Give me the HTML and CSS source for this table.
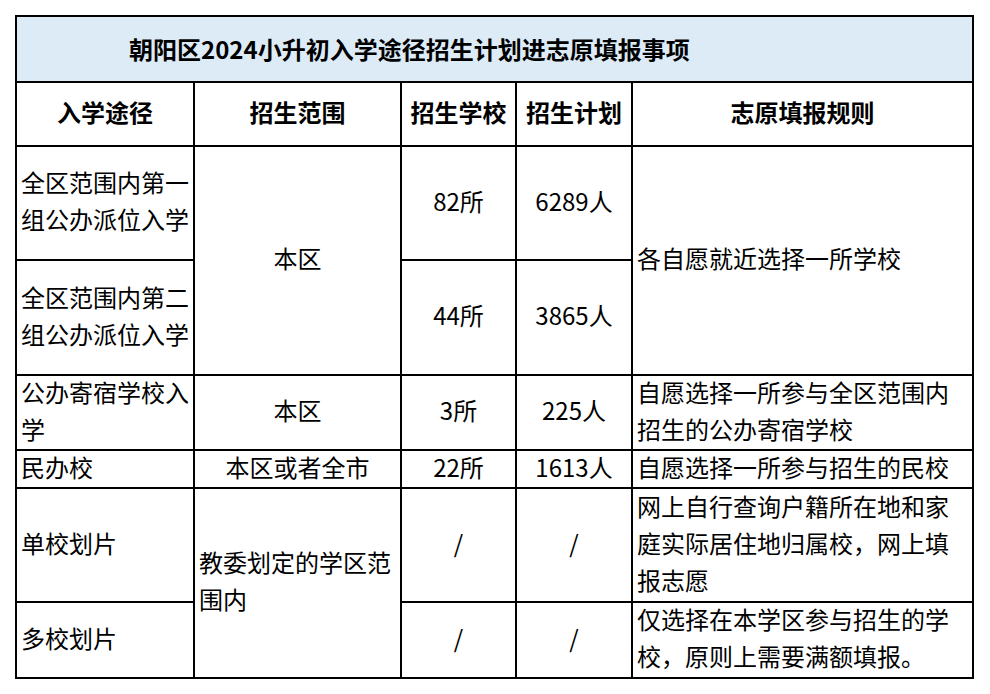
FILE: index.html
```html
<!DOCTYPE html>
<html lang="zh-CN">
<head>
<meta charset="utf-8">
<title>朝阳区2024小升初入学途径招生计划进志原填报事项</title>
<link rel="stylesheet" href="styles.css">
</head>
<body>
<div class="sheet">
  <div class="cell title">朝阳区2024小升初入学途径招生计划进志原填报事项</div>

  <div class="cell head">入学途径</div>
  <div class="cell head">招生范围</div>
  <div class="cell head">招生学校</div>
  <div class="cell head">招生计划</div>
  <div class="cell head">志原填报规则</div>

  <div class="cell">全区范围内第一组公办派位入学</div>
  <div class="cell mid span2">本区</div>
  <div class="cell mid">82所</div>
  <div class="cell mid">6289人</div>
  <div class="cell span2">各自愿就近选择一所学校</div>

  <div class="cell">全区范围内第二组公办派位入学</div>
  <div class="cell mid">44所</div>
  <div class="cell mid">3865人</div>

  <div class="cell">公办寄宿学校入学</div>
  <div class="cell mid">本区</div>
  <div class="cell mid">3所</div>
  <div class="cell mid">225人</div>
  <div class="cell">自愿选择一所参与全区范围内招生的公办寄宿学校</div>

  <div class="cell">民办校</div>
  <div class="cell mid">本区或者全市</div>
  <div class="cell mid">22所</div>
  <div class="cell mid">1613人</div>
  <div class="cell">自愿选择一所参与招生的民校</div>

  <div class="cell">单校划片</div>
  <div class="cell span2">教委划定的学区范围内</div>
  <div class="cell mid">/</div>
  <div class="cell mid">/</div>
  <div class="cell">网上自行查询户籍所在地和家庭实际居住地归属校，网上填报志愿</div>

  <div class="cell">多校划片</div>
  <div class="cell mid">/</div>
  <div class="cell mid">/</div>
  <div class="cell">仅选择在本学区参与招生的学校，原则上需要满额填报。</div>
</div>
</body>
</html>
```

FILE: styles.css
```css
html, body {
  margin: 0;
  padding: 0;
  background: #ffffff;
}

body {
  font-family: "Noto Sans CJK SC", "Noto Sans", sans-serif;
  color: #000000;
}

.sheet {
  margin: 15px 0 0 15px;
  width: 955px;
  display: grid;
  grid-template-columns: 176px 205px 113px 114px 339px;
  grid-template-rows: 64px 62px 112px 113px 73px 36px 112px 74px;
  gap: 2px;
  padding: 2px;
  background: #000000;
}

.cell {
  background: #ffffff;
  display: flex;
  align-items: center;
  padding: 0 4px 6px 4px;
  font-size: 24px;
  line-height: 37px;
}

.title {
  grid-column: 1 / -1;
  background: #ddebf7;
  font-weight: 700;
  padding-left: 112px;
  padding-bottom: 2px;
}

.head {
  justify-content: center;
  text-align: center;
  font-weight: 700;
}

.mid {
  justify-content: center;
  text-align: center;
}

.span2 {
  grid-row: span 2;
}
```
